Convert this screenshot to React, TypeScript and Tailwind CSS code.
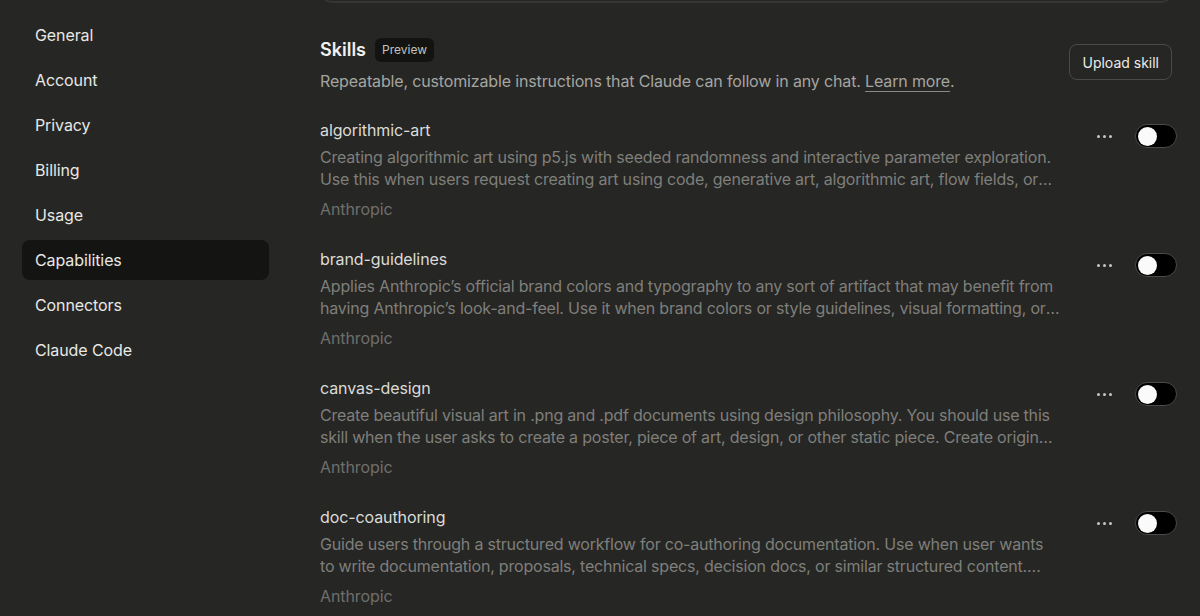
const nav = ['General', 'Account', 'Privacy', 'Billing', 'Usage', 'Capabilities', 'Connectors', 'Claude Code'];

const skills = [
  {
    name: 'algorithmic-art',
    desc: 'Creating algorithmic art using p5.js with seeded randomness and interactive parameter exploration. Use this when users request creating art using code, generative art, algorithmic art, flow fields, or particle systems.',
  },
  {
    name: 'brand-guidelines',
    desc: 'Applies Anthropic\u2019s official brand colors and typography to any sort of artifact that may benefit from having Anthropic\u2019s look-and-feel. Use it when brand colors or style guidelines, visual formatting, or company design standards apply.',
  },
  {
    name: 'canvas-design',
    desc: 'Create beautiful visual art in .png and .pdf documents using design philosophy. You should use this skill when the user asks to create a poster, piece of art, design, or other static piece. Create original visual designs.',
  },
  {
    name: 'doc-coauthoring',
    desc: 'Guide users through a structured workflow for co-authoring documentation. Use when user wants to write documentation, proposals, technical specs, decision docs, or similar structured content. This workflow helps.',
  },
];

function Toggle() {
  return (
    <div className="flex h-[24px] w-[42px] items-center rounded-full border border-[#4a4a48] bg-black px-[2px]">
      <div className="h-[19px] w-[19px] rounded-full bg-[#fafafa]" />
    </div>
  );
}

export default function App() {
  return (
    <div className="flex h-[616px] w-[1200px] overflow-hidden bg-[#262625] font-['Inter',sans-serif] text-[#e8e8e4]">
      <aside className="w-[320px] shrink-0 pl-[22px] pr-[51px] pt-[15px]">
        <nav className="flex flex-col gap-[5px]">
          {nav.map((item) => (
            <div
              key={item}
              className={
                'flex h-[40px] items-center rounded-lg px-[13px] text-[16px] tracking-[-0.1px] ' +
                (item === 'Capabilities' ? 'bg-[#141413]' : '')
              }
            >
              {item}
            </div>
          ))}
        </nav>
      </aside>

      <main className="flex flex-1 flex-col pr-[23px]">
        <div className="-mt-[10px] mr-[4px] h-[13px] rounded-b-xl border-x border-b-2 border-[#363634]" />

        <div className="mt-[33px] flex items-start justify-between">
          <div>
            <div className="flex items-center gap-[9px]">
              <h2 className="text-[18px] font-semibold text-[#f0f0ec]">Skills</h2>
              <span className="rounded-md bg-[#131312] px-[7px] py-[3px] text-[12px] text-[#c2c2bd]">Preview</span>
            </div>
            <p className="mt-[6px] text-[16px] tracking-[-0.15px] text-[#a5a5a0]">
              Repeatable, customizable instructions that Claude can follow in any chat.{' '}
              <span className="underline decoration-[#8a8a85] underline-offset-[4px]">Learn more</span>.
            </p>
          </div>
          <button className="mt-[8px] mr-[5px] h-[36px] rounded-lg border border-[#4a4a47] px-[12px] text-[14px] text-[#ececE8]">
            Upload skill
          </button>
        </div>

        <div className="mt-[26px] flex flex-col gap-[28px]">
          {skills.map((s) => (
            <div key={s.name} className="flex items-start justify-between">
              <div className="w-[740px]">
                <div className="text-[16px] leading-[22px] tracking-[-0.1px] text-[#dcdcd7]">{s.name}</div>
                <p className="mt-[5px] line-clamp-2 text-[16px] leading-[22px] tracking-[-0.2px] text-[#7f7f7a]">
                  {s.desc}
                </p>
                <div className="mt-[8px] text-[16px] leading-[22px] tracking-[-0.1px] text-[#6f6f6b]">Anthropic</div>
              </div>
              <div className="mt-[5px] flex items-center gap-[23px]">
                <div className="flex gap-[3px]">
                  <span className="h-[3px] w-[3px] rounded-full bg-[#c8c8c3]" />
                  <span className="h-[3px] w-[3px] rounded-full bg-[#c8c8c3]" />
                  <span className="h-[3px] w-[3px] rounded-full bg-[#c8c8c3]" />
                </div>
                <Toggle />
              </div>
            </div>
          ))}
        </div>
      </main>
    </div>
  );
}
